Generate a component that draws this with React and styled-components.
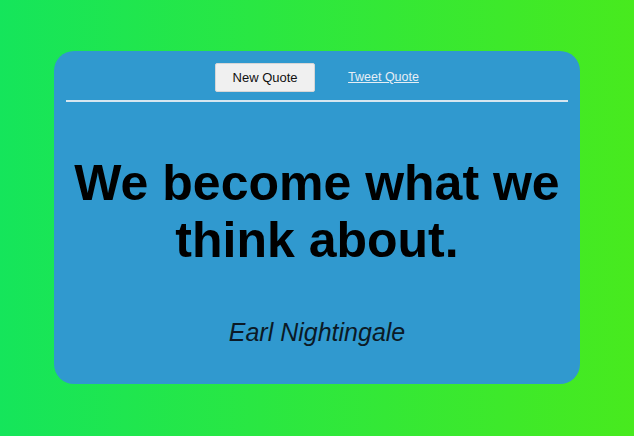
import styled, { createGlobalStyle } from 'styled-components';

const GlobalStyle = createGlobalStyle`
	html, body {
		margin: 0;
		height: 100%;
	}
	body {
		font-family: 'Liberation Sans', Arial, sans-serif;
		background: linear-gradient(90deg, #15e55b 0%, #48ea1e 100%);
	}
	#root {
		height: 100%;
	}
`;

const App = () => {
	return (
		<>
			<GlobalStyle />
			<Page>
				<Card>
					<Toolbar>
						<QuoteButton>New Quote</QuoteButton>
						<TweetLink href='#'>Tweet Quote</TweetLink>
					</Toolbar>
					<Divider />
					<QuoteText>We become what we think about.</QuoteText>
					<Author>Earl Nightingale</Author>
				</Card>
			</Page>
		</>
	);
};

const Page = styled.main`
	height: 436px;
	padding: 51px 54px 0;
	box-sizing: border-box;
`;

const Card = styled.section`
	height: 333px;
	background: #3099cf;
	border-radius: 20px;
	padding: 12px 12px 0;
	box-sizing: border-box;
	display: flex;
	flex-direction: column;
	align-items: center;
`;

const Toolbar = styled.div`
	display: flex;
	align-items: center;
	gap: 33px;
	height: 28px;
`;

const QuoteButton = styled.button`
	width: 100px;
	height: 29px;
	background: #f0f0f0;
	border: 1px solid #d6d6d6;
	border-radius: 2px;
	font-family: 'Liberation Sans', Arial, sans-serif;
	font-size: 13px;
	color: #111;
	cursor: pointer;
`;

const TweetLink = styled.a`
	color: #e6eef5;
	font-size: 12.5px;
	text-decoration: underline;
`;

const Divider = styled.hr`
	align-self: stretch;
	margin: 9px 0 0;
	border: none;
	border-top: 2px solid #d6e6f0;
`;

const QuoteText = styled.h1`
	margin: 53px 0 0;
	font-size: 50px;
	font-weight: bold;
	line-height: 57px;
	text-align: center;
	color: #000;
	max-width: 500px;
`;

const Author = styled.p`
	margin: 49px 0 0;
	font-size: 25px;
	font-style: italic;
	color: #0b1a26;
`;

export default App;
